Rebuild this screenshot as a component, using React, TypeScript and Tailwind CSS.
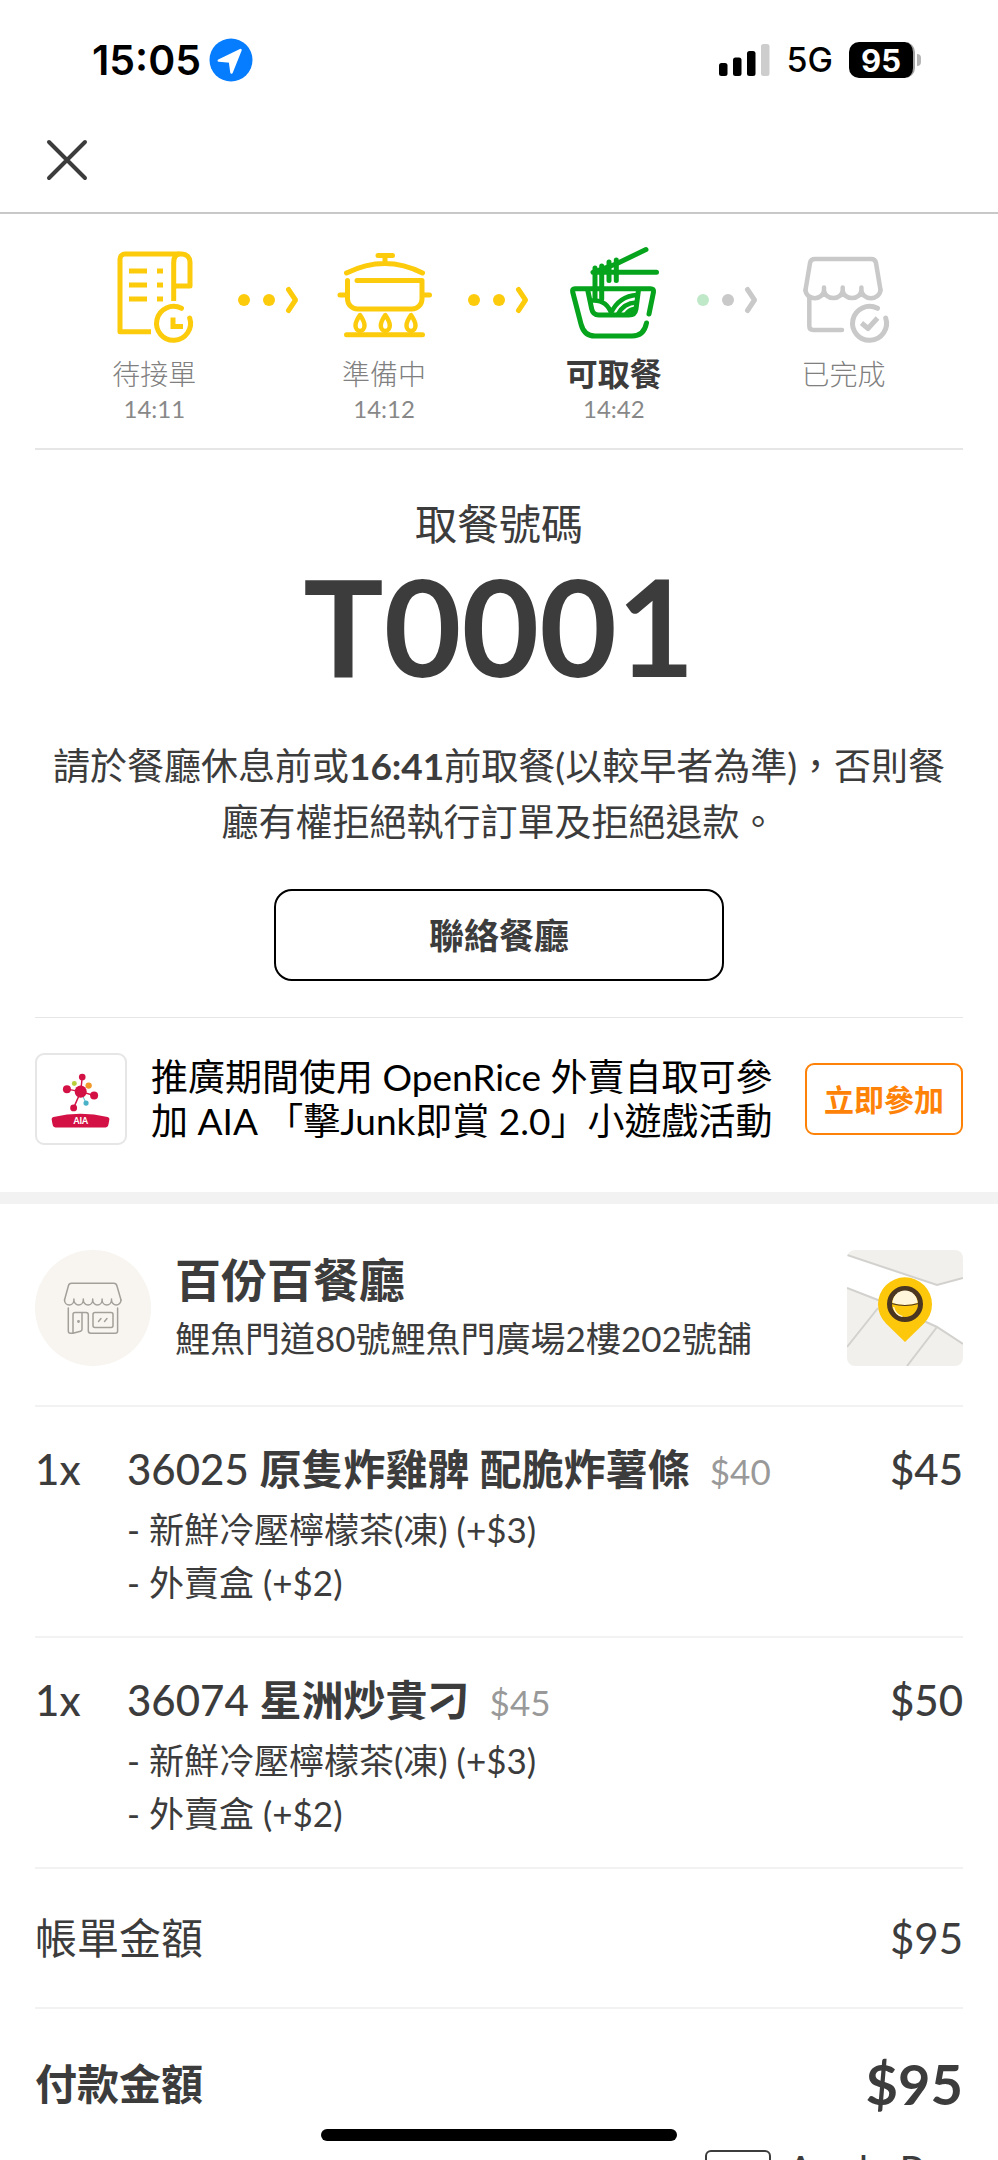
import { Fragment, type ReactNode } from "react"

type StepState = "done" | "current" | "pending"

const stepColors: Record<StepState, string> = {
    done: "text-[#fccb0c]",
    current: "text-[#06a41c]",
    pending: "text-[#c9c9c9]",
}

function StepSvg({ children }: { children: ReactNode }) {
    return (
        <svg viewBox="0 0 100 100" className="size-[100px]" fill="none" stroke="currentColor" strokeWidth="5" strokeLinecap="round" strokeLinejoin="round" aria-hidden="true">
            {children}
        </svg>
    )
}

const ReceiptIcon = () => (
    <StepSvg>
        <path strokeLinecap="butt" d="M47 85.700H16V13a5 5 0 0 1 5-5h57a8 8 0 0 1 8 8v24H70" />
        <path strokeLinecap="butt" d="M69.700 55V17q0-9 6-9" />
        <path strokeLinecap="butt" d="M25 25h18M25 39h18M25 53h18M53 25h6M53 39h6M53 53h6" />
        <path d="M77.500 62.300A17 17 0 1 0 85.700 72" />
        <path strokeLinecap="butt" strokeLinejoin="miter" d="M69 71.500v9h10" />
    </StepSvg>
)

const PotIcon = () => (
    <StepSvg>
        <path d="M44 9.500h14.500M51 10v6M12.500 27Q51 8 88.500 27" />
        <path d="M23 34.500h65V53a10 10 0 0 1-10 10H23.500a10 10 0 0 1-10-10V34.500M6 49h7M88 49h7.500M12.500 88.700h76" />
        {[26, 51.3, 77].map((x) => (
            <path key={x} strokeWidth="4.500" d={`M${x} 69q-4.500 6.500-4.500 10.500a4.500 5.500 0 0 0 9 0q0-4-4.500-10.500Z`} />
        ))}
    </StepSvg>
)

const NoodleIcon = () => (
    <StepSvg>
        <path d="M82 3.500 52 18 29 26.300H92.500" />
        <path d="M31 22v30M37.700 20v33M45 16v18.500M52.300 14v20.500" />
        <path d="M85 68 89.500 46q.5-3.300-3-3.300H11q-3 0-2.300 3.300L17 78q3 12 14 12h37q12 0 14.500-13" />
        <path d="M23.700 44l4 19q1.300 6 7 6H65q6 0 7-6l2.500-19" />
        <path strokeWidth="4.500" d="M28 54.500q15-1 19.500 13.500M47 67q8-17 26-18M54 68q6-11 18-11.500M62 68q3-4 8-5" />
    </StepSvg>
)

const StoreDoneIcon = () => (
    <StepSvg>
        <path strokeWidth="4.500" d="M11.500 44 16 17q.7-4 5-4h56q4.300 0 5 4l4.500 27" />
        <path strokeWidth="4.500" d="M11.500 44a9.100 8 0 0 0 18.500 0v-2.500V44a9.300 8 0 0 0 18.700 0v-2.500V44a9.300 8 0 0 0 18.700 0v-2.500V44a9.300 8 0 0 0 19 0" />
        <path strokeWidth="4.500" d="M15.300 51v29q0 4 4 4H48" />
        <path d="M83.500 62.300A17 17 0 1 0 91.700 72" />
        <path strokeLinecap="butt" d="m67.500 77 6.500 5.500L83.500 72" />
    </StepSvg>
)

const steps: { label: string; time?: string; state: StepState; Icon: () => ReactNode }[] = [
    { label: "待接單", time: "14:11", state: "done", Icon: ReceiptIcon },
    { label: "準備中", time: "14:12", state: "done", Icon: PotIcon },
    { label: "可取餐", time: "14:42", state: "current", Icon: NoodleIcon },
    { label: "已完成", state: "pending", Icon: StoreDoneIcon },
]

const orderItems = [
    { qty: 1, code: "36025", name: "原隻炸雞髀 配脆炸薯條", base: 40, total: 45 },
    { qty: 1, code: "36074", name: "星洲炒貴刁", base: 45, total: 50 },
]

const extras = ["- 新鮮冷壓檸檬茶(凍) (+$3)", "- 外賣盒 (+$2)"]

function StepArrow({ pending }: { pending: boolean }) {
    const main = pending ? "#c9c9c9" : "#fccb0c"
    return (
        <svg viewBox="0 0 63 28" className="mt-10 h-7 w-[63px] shrink-0" fill="none" aria-hidden="true">
            <circle cx="6" cy="14" r="6" fill={pending ? "#bfe8c8" : main} />
            <circle cx="31" cy="14" r="6" fill={main} />
            <path d="m50.500 3.500 7 10.500-7 10.500" stroke={main} strokeWidth="5" strokeLinecap="round" strokeLinejoin="round" />
        </svg>
    )
}

function StatusBar() {
    return (
        <div className="flex h-[120px] shrink-0 items-center justify-between pr-[77px] pl-[92px] font-['Inter',sans-serif] text-black">
            <div className="flex items-center gap-2">
                <span className="text-[41px] leading-none font-semibold">15:05</span>
                <svg viewBox="0 0 44 44" className="size-11" aria-hidden="true">
                    <circle cx="22" cy="22" r="21.500" fill="#067dfe" />
                    <path d="M9.800 22.600 31.500 12 22.500 34.500 21 23.500Z" fill="#fff" stroke="#fff" strokeWidth="2.500" strokeLinejoin="round" />
                </svg>
            </div>
            <div className="flex items-center gap-4">
                <svg viewBox="0 0 52 34" className="h-[34px] w-[52px]" aria-hidden="true">
                    <rect x="0" y="20" width="8.500" height="13" rx="2.500" />
                    <rect x="14" y="14.500" width="8.500" height="18.500" rx="2.500" />
                    <rect x="28" y="8" width="8.500" height="25" rx="2.500" />
                    <rect x="42" y="1" width="8.500" height="32" rx="2.500" fill="#cdcdcd" />
                </svg>
                <span className="text-[34px] leading-none font-medium">5G</span>
                <div className="flex items-center gap-0.5">
                    <span className="flex h-9 w-[66px] items-center justify-center rounded-[10px] border-r-2 border-[#a5a5a5] bg-black text-[31px] leading-none font-bold text-white">95</span>
                    <span className="h-3 w-1 rounded-r-full bg-[#b5b5b5]" />
                </div>
            </div>
        </div>
    )
}

function AiaLogo() {
    return (
        <svg viewBox="0 0 92 92" className="size-full" role="img" aria-label="AIA">
            <path d="M45.700 38.300 47.300 23M45.700 38.300 31.300 35.700M45.700 38.300l14 4M45.700 38.300l-7.400 17" stroke="#d31145" strokeWidth="1.500" />
            <path d="M45.700 38.300 51.300 50.300" stroke="#48b3c8" strokeWidth="1" />
            <g fill="#d31145">
                <circle cx="45.700" cy="38.300" r="6.300" />
                <circle cx="47.300" cy="23" r="3.500" />
                <circle cx="31.300" cy="35.700" r="4.200" />
                <circle cx="59.700" cy="42.300" r="4.200" />
                <circle cx="38.300" cy="55.300" r="3.600" />
                <path d="M15.300 67q0-1.700 2-2.300Q45.500 58 73.700 64.700q2 .6 2 2.300-.5 4-1.200 6.500-.5 2.200-2.700 2.200H19.200q-2.200 0-2.700-2.200Q15.800 71 15.300 67Z" />
            </g>
            <circle cx="39" cy="29.700" r="2.600" fill="#b8ce3a" />
            <circle cx="54" cy="32" r="3.300" fill="#f09a2a" />
            <circle cx="51.300" cy="50.300" r="2.700" fill="#48b3c8" />
            <text x="45.700" y="72.500" textAnchor="middle" fontSize="9" fontWeight="900" fill="#fff" fontFamily="Lato, sans-serif">AIA</text>
        </svg>
    )
}

function ShopAvatar() {
    return (
        <svg viewBox="0 0 116 116" className="size-[116px] shrink-0 rounded-full bg-[#f8f5f1]" fill="none" stroke="#a39f99" strokeWidth="1.500" strokeLinecap="round" strokeLinejoin="round" aria-hidden="true">
            <path d="m29.500 50 4-14.500q.6-2.200 3-2.200h42.300q2.400 0 3 2.200L86 50" />
            <path d="M29.500 50a4.700 5 0 0 0 9.400 0v-1 1a4.700 5 0 0 0 9.400 0v-1 1a4.700 5 0 0 0 9.400 0v-1 1a4.700 5 0 0 0 9.400 0v-1 1a4.700 5 0 0 0 9.400 0v-1 1a4.700 5 0 0 0 9.500 0" />
            <path d="M33.300 58v23q0 2.300 2.300 2.300H38l7.500-2q1.500-.4 1.500-2V62.500M38 83V64.500q0-2 2-2h11q2.300 0 2.300 2.300v16q0 2.500 2.500 2.500h24.500q2.300 0 2.300-2.300V58" />
            <rect x="58" y="62.500" width="20" height="15" rx="2" />
            <path d="m63.500 71.500 2.500-3m3.500 3 2.500-3" />
            <circle cx="43.500" cy="71.500" r=".7" />
        </svg>
    )
}

function MapThumb() {
    return (
        <svg viewBox="0 0 116 116" className="size-full" aria-hidden="true">
            <rect width="116" height="116" fill="#f1f0ec" />
            <path d="M0 5 90 35l26-7v66L90 77 31 50 0 38Z" fill="#fff" />
            <path d="M0 5 90 35l26-7M0 38l31 12 59 27 26 17M31 58 0 97M90 77 60 116" stroke="#d2d1ce" strokeWidth="2" fill="none" />
            <path d="M58 92 39 73.500A27 27 0 1 1 77 73.500Z" fill="#fdc70c" />
            <circle cx="58" cy="54" r="15.500" fill="#fdc70c" stroke="#4b3621" strokeWidth="5" />
            <path d="M45.500 53a12.500 12.500 0 0 1 25 0q-12.500 4-25 0Z" fill="#fff6dc" />
            <path d="M44.500 53.500q13.500 4 27 0" stroke="#4b3621" strokeWidth="1.200" fill="none" />
            <path d="M46.500 57q2 8 9 9.500" stroke="#fff6dc" strokeWidth="1.200" fill="none" />
        </svg>
    )
}

export default function App() {
    return (
        <div lang="zh-Hant" className="relative flex h-screen flex-col overflow-hidden bg-white font-['Lato','Noto_Sans_CJK_TC',sans-serif] text-[#3c3c3c]">
            <StatusBar />

            <header className="flex h-[94px] shrink-0 items-center border-b-2 border-[#c8c8c8] px-[46px] pb-3">
                <button type="button" aria-label="關閉">
                    <svg viewBox="0 0 42 42" className="size-[42px]" stroke="#3c3c3c" strokeWidth="4" strokeLinecap="round" aria-hidden="true">
                        <path d="m3 3 36 36M39 3 3 39" />
                    </svg>
                </button>
            </header>

            <main className="min-h-0 flex-1 overflow-y-auto [scrollbar-width:none]">
                {/* Progress */}
                <section className="mx-[35px] border-b-2 border-[#e6e6e6] px-9 pt-8 pb-6">
                    <ol className="flex items-start">
                        {steps.map(({ label, time, state, Icon }, i) => (
                            <Fragment key={label}>
                                {i > 0 && <li aria-hidden="true"><StepArrow pending={state === "pending"} /></li>}
                                <li className="flex flex-1 flex-col items-center">
                                    <span className={stepColors[state]}><Icon /></span>
                                    <span className={state === "current" ? "mt-2 text-[32px] leading-10 font-bold" : "mt-2 text-[28px] leading-10 font-light text-[#808080]"}>{label}</span>
                                    {time && <time className="text-2xl leading-[30px] text-[#888888]">{time}</time>}
                                </li>
                            </Fragment>
                        ))}
                    </ol>
                </section>

                {/* Pickup code */}
                <section className="mx-[35px] border-b border-[#e6e6e6] pt-[46px] pb-9 text-center">
                    <h2 className="text-[42px] leading-[56px]">取餐號碼</h2>
                    <p className="mt-1 text-[134px] leading-[140px] font-bold">T0001</p>
                    <p className="mt-[42px] text-[37px] leading-[56px]">
                        請於餐廳休息前或<strong>16:41</strong>前取餐(以較早者為準)，否則餐廳有權拒絕執行訂單及拒絕退款。
                    </p>
                    <button type="button" className="mt-[39px] h-[92px] w-[450px] rounded-[18px] border-2 border-black text-[35px] font-bold">聯絡餐廳</button>
                </section>

                {/* Promotion */}
                <section className="flex items-center gap-6 border-b-12 border-[#f2f2f2] px-[35px] pt-[35px] pb-[47px]">
                    <div className="size-[92px] shrink-0 rounded-[9px] border-2 border-[#e6e6e6]">
                        <AiaLogo />
                    </div>
                    <p className="flex-1 text-[37px] leading-11 text-black">推廣期間使用 OpenRice 外賣自取可參加 AIA 「擊Junk即賞 2.0」小遊戲活動</p>
                    <button type="button" className="h-[72px] w-[158px] shrink-0 rounded-[9px] border-2 border-[#ff8208] text-[30px] font-bold text-[#ff8208]">立即參加</button>
                </section>

                {/* Restaurant */}
                <section className="mx-[35px] flex items-center border-b-2 border-[#f2f2f2] pt-[46px] pb-[39px]">
                    <ShopAvatar />
                    <div className="ml-6 flex-1">
                        <h1 className="text-[46px] leading-[56px] font-bold">百份百餐廳</h1>
                        <p className="mt-1 text-[35px] leading-[52px]">鯉魚門道80號鯉魚門廣場2樓202號舖</p>
                    </div>
                    <button type="button" aria-label="地圖" className="size-[116px] shrink-0 overflow-hidden rounded-lg">
                        <MapThumb />
                    </button>
                </section>

                {/* Order lines */}
                <ul className="mx-[35px]">
                    {orderItems.map((item) => (
                        <li key={item.code} className="flex border-b-2 border-[#f2f2f2] pt-[34px] pb-[27px] text-[42px] leading-[56px]">
                            <span className="w-[92px] shrink-0 font-['Lato_Medium','Lato'] font-medium">{item.qty}x</span>
                            <div className="flex-1">
                                <h3>
                                    <span className="font-['Lato_Medium','Lato'] font-medium">{item.code}</span> <span className="font-bold">{item.name}</span>
                                    <span className="ml-5 text-[35px] leading-none text-[#999999]">${item.base}</span>
                                </h3>
                                <ul className="mt-1.5 text-[35px] leading-[53px]">
                                    {extras.map((extra) => <li key={extra}>{extra}</li>)}
                                </ul>
                            </div>
                            <span className="font-['Lato_Medium','Lato'] font-medium">${item.total}</span>
                        </li>
                    ))}
                </ul>

                {/* Totals */}
                <dl className="mx-[35px] text-[42px]">
                    <div className="flex h-[140px] items-center justify-between border-b-2 border-[#f2f2f2]">
                        <dt>帳單金額</dt>
                        <dd>$95</dd>
                    </div>
                    <div className="flex items-center justify-between pt-[43px] font-bold">
                        <dt>付款金額</dt>
                        <dd className="text-[56px] leading-[64px]">$95</dd>
                    </div>
                </dl>
                <div className="mx-[35px] mt-[30px] flex items-center justify-end gap-4 pb-20">
                    <span className="h-10 w-[66px] rounded-md border-2 border-[#3c3c3c]" />
                    <span className="text-[40px] leading-12">Apple Pay</span>
                </div>
            </main>

            {/* Home indicator */}
            <div className="absolute bottom-[19px] left-1/2 h-3 w-[356px] -translate-x-1/2 rounded-full bg-black" />
        </div>
    )
}
